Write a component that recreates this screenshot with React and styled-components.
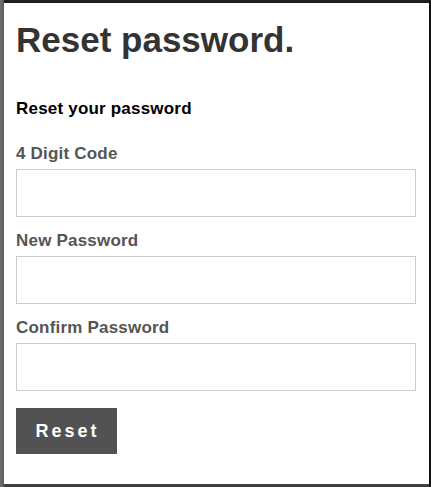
import React from "react";
import styled, { createGlobalStyle } from "styled-components";

const Global = createGlobalStyle`
  html, body {
    margin: 0;
    padding: 0;
  }
  body {
    background: #2a2a2a;
    font-family: "Liberation Sans", Arial, sans-serif;
  }
`;

const Page = styled.div`
  width: 431px;
  height: 487px;
  box-sizing: border-box;
  padding: 3px 2px 3px 4px;
  background:
    linear-gradient(90deg, #707070 0, #5c5c5c 4px, transparent 4px),
    linear-gradient(270deg, #101010 0, #151515 2px, transparent 2px),
    linear-gradient(180deg, #222 0, #1a1a1a 3px, transparent 3px),
    linear-gradient(0deg, #3a3a3a 0, #444 3px, transparent 3px),
    #2a2a2a;
`;

const Panel = styled.div`
  background: #fff;
  height: 100%;
  box-sizing: border-box;
  padding: 16px 13px 0 12px;
`;

const Title = styled.h1`
  margin: 0;
  font-size: 35px;
  font-weight: bold;
  color: #333;
  line-height: 41px;
`;

const Subtitle = styled.h3`
  margin: 40px 0 0;
  font-size: 17px;
  letter-spacing: 0.2px;
  font-weight: bold;
  color: #000;
  line-height: 18px;
`;

const Form = styled.form`
  display: flex;
  flex-direction: column;
  margin-top: 26px;
`;

const Field = styled.div`
  display: flex;
  flex-direction: column;
  gap: 6px;
  margin-bottom: 14px;
`;

const Label = styled.label`
  font-size: 17px;
  letter-spacing: 0.2px;
  font-weight: bold;
  color: #555;
  line-height: 19px;
`;

const Input = styled.input`
  box-sizing: border-box;
  width: 400px;
  height: 48px;
  border: 1px solid #ccc;
  background: #fff;
  padding: 0 10px;
  font-size: 16px;
  font-family: inherit;
  outline: none;
`;

const Button = styled.button`
  align-self: flex-start;
  margin-top: 3px;
  width: 101px;
  height: 46px;
  background: #525252;
  color: #fff;
  border: none;
  font-family: inherit;
  font-size: 18px;
  font-weight: bold;
  letter-spacing: 3px;
  padding: 0 0 0 2px;
  cursor: pointer;
`;

export default function App() {
  return (
    <>
      <Global />
      <Page>
        <Panel>
          <Title>Reset password.</Title>
          <Subtitle>Reset your password</Subtitle>
          <Form onSubmit={(e) => e.preventDefault()}>
            <Field>
              <Label>4 Digit Code</Label>
              <Input type="text" />
            </Field>
            <Field>
              <Label>New Password</Label>
              <Input type="password" />
            </Field>
            <Field>
              <Label>Confirm Password</Label>
              <Input type="password" />
            </Field>
            <Button type="submit">Reset</Button>
          </Form>
        </Panel>
      </Page>
    </>
  );
}
